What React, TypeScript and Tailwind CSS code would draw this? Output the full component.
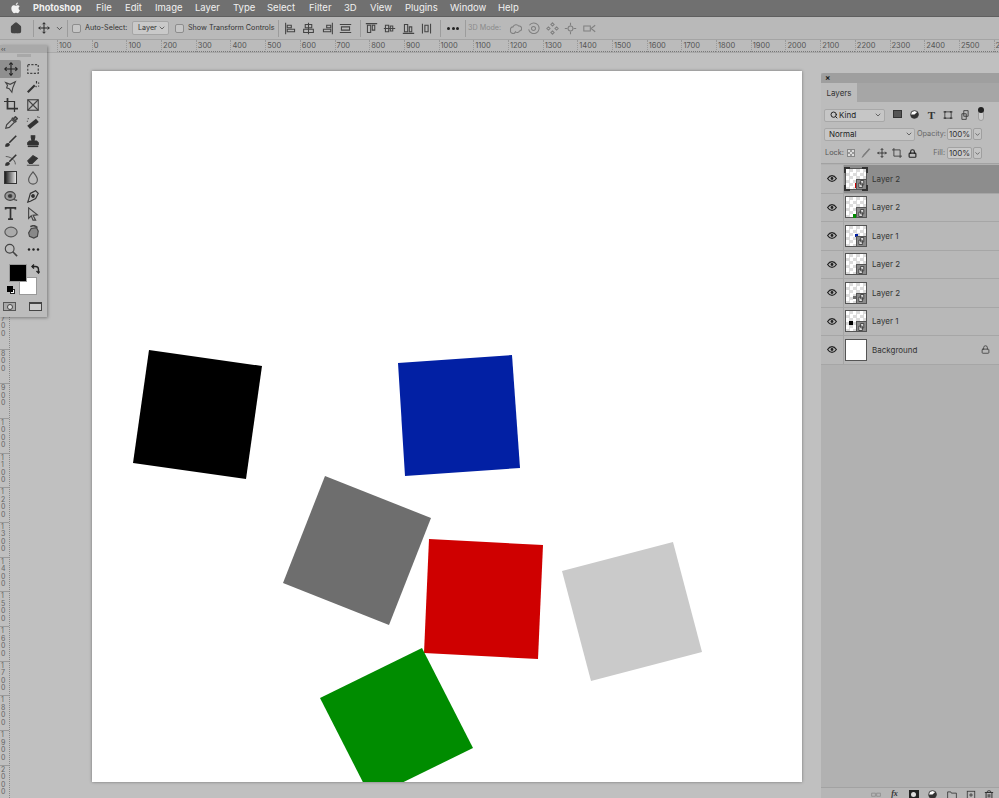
import type { ReactNode } from "react";
import { ChevronDown, House, Lock, Search, Trash2 } from "lucide-react";

const font = "font-['Inter','Liberation_Sans',sans-serif]";

const menus = [
  { label: "File", w: "w-[29px]" },
  { label: "Edit", w: "w-[30px]" },
  { label: "Image", w: "w-[40px]" },
  { label: "Layer", w: "w-[38px]" },
  { label: "Type", w: "w-[34px]" },
  { label: "Select", w: "w-[42px]" },
  { label: "Filter", w: "w-[35px]" },
  { label: "3D", w: "w-[26px]" },
  { label: "View", w: "w-[35px]" },
  { label: "Plugins", w: "w-[45px]" },
  { label: "Window", w: "w-[48px]" },
  { label: "Help", w: "w-[30px]" },
];

const hTicks = [
  "100", "0", "100", "200", "300", "400", "500", "600", "700", "800", "900", "1000", "1100", "1200",
  "1300", "1400", "1500", "1600", "1700", "1800", "1900", "2000", "2100", "2200", "2300", "2400", "2500", "2",
];

const vTicks = ["0", "100", "200", "300", "400", "500", "600", "700", "800", "900", "1000", "1100", "1200", "1300", "1400", "1500", "1600", "1700", "1800", "1900", "2000"];

const shapes = [
  { fill: "#000000", points: "57,279 170,295 154,408 41,392" },
  { fill: "#0220a4", points: "306,292 420,284 428,397 313,405" },
  { fill: "#6e6e6e", points: "233,405 339,447 297,554 191,512" },
  { fill: "#cf0000", points: "337,468 451,474 446,588 332,582" },
  { fill: "#cacaca", points: "470,500 581,471 610,581 499,610" },
  { fill: "#008c00", points: "330,577 381,677 279,727 228,627" },
];

const layers = [
  { name: "Layer 2", active: true, mark: "left-[9px] top-[14px] h-[5px] w-[2px] bg-[#cf0000]" },
  { name: "Layer 2", active: false, mark: "left-[7px] top-[17px] h-[4px] w-[4px] bg-[#008c00]" },
  { name: "Layer 1", active: false, mark: "left-[9px] top-[8px] h-[3px] w-[3px] bg-[#0220a4]" },
  { name: "Layer 2", active: false, mark: "" },
  { name: "Layer 2", active: false, mark: "left-[7px] top-[13px] h-[3px] w-[3px] bg-[#6e6e6e]" },
  { name: "Layer 1", active: false, mark: "left-[3px] top-[10px] h-[4px] w-[4px] bg-black" },
];

function Ico({ s = 14, children, c = "#333" }: { s?: number; children: ReactNode; c?: string }) {
  return (
    <svg width={s} height={s} viewBox="0 0 16 16" fill="none" stroke={c} strokeWidth="1.3" className="shrink-0">
      {children}
    </svg>
  );
}

const MoveArrows = ({ c = "#222", s = 14 }: { c?: string; s?: number }) => (
  <Ico s={s} c={c}>
    <path d="M8 1v14M1 8h14" />
    <path d="M6 3l2-2 2 2M6 13l2 2 2-2M3 6L1 8l2 2M13 6l2 2-2 2" />
  </Ico>
);

const EyeIcon = () => (
  <svg width="10" height="7" viewBox="0 0 10 7" fill="none" stroke="#222" strokeWidth="1.2" className="shrink-0">
    <path d="M.6 3.500C2 1.300 3.500.6 5 .6s3 .7 4.400 2.900C8 5.700 6.500 6.400 5 6.400S2 5.700.6 3.500z" />
    <circle cx="5" cy="3.500" r="1.400" fill="#222" stroke="none" />
  </svg>
);

// tool icons, left column then right column, row by row
const tools: ReactNode[] = [
  <MoveArrows key="move" />,
  <Ico key="marquee" c="#444"><rect x="2" y="3" width="12" height="10" strokeDasharray="2.5 1.6" /></Ico>,
  <Ico key="lasso" c="#444"><path d="M2 3l5 2 6-3-3 7-1 5-3-4-3-1 1-3z" /></Ico>,
  <Ico key="wand"><path d="M2 14l8-8" strokeWidth="2.4" /><path d="M12 1v3M14 3l1 1M11 7l1 1M15 7h-1" /></Ico>,
  <Ico key="crop"><path d="M4 0v12h12" strokeWidth="2" /><path d="M0 4h12v12" strokeWidth="1.4" /></Ico>,
  <Ico key="frame" c="#444"><rect x="2" y="2" width="12" height="12" /><path d="M2 2l12 12M14 2L2 14" /></Ico>,
  <Ico key="dropper" c="#444"><path d="M2 14l1-4 6-6 3 3-6 6z" /><path d="M9 2l5 5M11 3l2-2 2 2-2 2" strokeWidth="2" /></Ico>,
  <Ico key="heal"><path d="M3 13L13 5" strokeWidth="5" /><path d="M13 1h1M15 1v1M2 3h1M1 6h1" /></Ico>,
  <Ico key="brush"><path d="M2 14c0-2 1-3 3-3l1 1c0 2-2 2-4 2z" fill="#333" /><path d="M6 10l8-8" strokeWidth="1.8" /></Ico>,
  <Ico key="stamp"><path d="M6 2h4v2l-1 4h3l2 2v2H2v-2l2-2h3L6 4z" fill="#333" /><path d="M2 14h12" strokeWidth="2" /></Ico>,
  <Ico key="history"><path d="M2 14c0-2 1-3 3-3l1 1c0 2-2 2-4 2z" fill="#333" /><path d="M6 10l8-8" strokeWidth="1.8" /><path d="M2 4c4 0 11 3 11 9" strokeWidth="0.8" /></Ico>,
  <Ico key="eraser"><path d="M2 9l6-6 5 3-6 6H4z" fill="#333" /><path d="M1 14h14" strokeWidth="0.9" /></Ico>,
  <svg key="gradient" width="13" height="13" viewBox="0 0 13 13" className="shrink-0">
    <defs>
      <linearGradient id="g1"><stop offset="0" stopColor="#111" /><stop offset="1" stopColor="#eee" /></linearGradient>
    </defs>
    <rect x="0.5" y="0.5" width="12" height="12" fill="url(#g1)" stroke="#333" />
  </svg>,
  <Ico key="drop" c="#555"><path d="M8 1c3 4 5 6 5 9a5 5 0 0 1-10 0c0-3 2-5 5-9z" /></Ico>,
  <Ico key="dodge" c="#444"><ellipse cx="7" cy="8" rx="6" ry="5" fill="#999" /><ellipse cx="7" cy="8" rx="2" ry="1.5" fill="#333" /><path d="M11 12l4 1" /></Ico>,
  <Ico key="pen"><path d="M5 5l6-3 3 3-3 6-6 3-3 1 1-3z" /><circle cx="8" cy="8" r="1.5" fill="#333" /></Ico>,
  <Ico key="type" s={13}><path d="M2 3V1h12v2M8 1v14M5 15h6" strokeWidth="2.1" /></Ico>,
  <Ico key="select" c="#444"><path d="M3 1l10 8-5 .5 3 5.500-3 0-2-5-3 3z" /></Ico>,
  <Ico key="ellipse" c="#555"><ellipse cx="8" cy="8" rx="7" ry="5.5" fill="#aaa" /></Ico>,
  <Ico key="hand" c="#444"><path d="M3 9l3-5 6-1 2 4-1 6-4 2-5-2z" fill="#888" /><path d="M5 2c3-2 6-1 8 1" strokeWidth="1.8" /></Ico>,
  <Ico key="zoom" c="#444"><circle cx="6.5" cy="6.5" r="5" /><path d="M10 10l5 5" strokeWidth="1.8" /></Ico>,
  <svg key="more" width="13" height="13" viewBox="0 0 13 13" fill="#222" className="shrink-0">
    <circle cx="2" cy="6.5" r="1.2" /><circle cx="6.5" cy="6.5" r="1.2" /><circle cx="11" cy="6.5" r="1.2" />
  </svg>,
];

const alignIcons = [
  "M2 1v14M4 4h5v3H4zM4 9h9v3H4z",
  "M8 1v14M4 3h8v4H4zM2 9h12v4H2z",
  "M14 1v14M7 4h5v3H7zM3 9h9v3H3z",
  "M1 3h14M1 13h14M3 6h10v4H3z",
];
const distIcons = [
  "M1 2h14M3 4h4v9H3zM9 4h3v6H9z",
  "M1 8h14M3 4h4v8H3zM9 5h3v6H9z",
  "M1 14h14M3 3h4v9H3zM9 6h3v6H9z",
  "M3 2v12M13 2v12M6 4h4v8H6z",
];
const threeD = [
  "M2 10a3 3 0 0 1 3-4 4 4 0 0 1 7-1 3 3 0 0 1 1 6 3 3 0 0 1-5 1 3 3 0 0 1-6-2z",
  "M3 4a6.5 6.5 0 1 1-1 5M8 5.5a2.5 2.5 0 1 1 0 5 2.5 2.5 0 0 1 0-5z",
  "M8 1l2 2-2 2-2-2zM8 11l2 2-2 2-2-2zM3 6l2 2-2 2-2-2zM13 6l2 2-2 2-2-2z",
  "M8 5a3 3 0 1 1 0 6 3 3 0 0 1 0-6zM8 1v3M8 12v3M1 8h3M12 8h3",
  "M1 5h8v6H1zM10 8l5-4M10 8l5 4",
];

function Check() {
  return <span className="block h-[9px] w-[9px] shrink-0 rounded-[2px] border border-[#8d8d8d] bg-[#c6c6c6]" />;
}

function Sep({ m }: { m: string }) {
  return <span className={`h-[17px] w-px shrink-0 bg-[#9c9c9c] ${m}`} />;
}

function IconCell({ d, c = "#444" }: { d: string; c?: string }) {
  return (
    <span className="flex w-[18.5px] shrink-0 justify-center">
      <Ico s={13} c={c}><path d={d} /></Ico>
    </span>
  );
}

function PanelChevron() {
  return (
    <span className="flex h-[12px] w-[9px] items-center justify-center rounded-[2px] border border-[#9f9f9f] bg-[#c4c4c4]">
      <ChevronDown size={7} strokeWidth={2} color="#333" />
    </span>
  );
}

function PercentField() {
  return (
    <div className="flex items-center gap-px">
      <span className="flex h-[12px] w-[25px] items-center justify-center rounded-[2px] border border-[#a2a2a2] bg-[#c9c9c9] text-[8px] text-[#333]">100%</span>
      <PanelChevron />
    </div>
  );
}

function LayerThumb({ mark, active }: { mark: string; active: boolean }) {
  return (
    <div className="relative h-[22px] w-[22px] shrink-0 border border-[#555] bg-[conic-gradient(#dcdcdc_25%,#ffffff_0_50%,#dcdcdc_0_75%,#ffffff_0)] bg-[length:7px_7px]">
      {mark && <span className={`absolute ${mark}`} />}
      <span className="absolute -bottom-px -right-px flex h-[11px] w-[11px] items-center justify-center border border-[#555] bg-[#8a8a8a]">
        <svg width="7" height="8" viewBox="0 0 8 9" fill="#ddd" stroke="#222" strokeWidth="0.8">
          <path d="M3 .5h3.5v5H3zM1 3.5h4v5H1z" />
        </svg>
      </span>
      {active && (
        <>
          <span className="absolute -left-[2px] -top-[2px] h-[6px] w-[6px] border-l-2 border-t-2 border-[#333]" />
          <span className="absolute -right-[2px] -top-[2px] h-[6px] w-[6px] border-r-2 border-t-2 border-[#333]" />
          <span className="absolute -bottom-[2px] -left-[2px] h-[6px] w-[6px] border-b-2 border-l-2 border-[#333]" />
          <span className="absolute -bottom-[2px] -right-[2px] h-[6px] w-[6px] border-b-2 border-r-2 border-[#333]" />
        </>
      )}
    </div>
  );
}

function LayerRow({ name, active, mark }: { name: string; active: boolean; mark: string }) {
  return (
    <div className={`flex h-[28.5px] items-center border-b border-[#a6a6a6] ${active ? "bg-[#8d8d8d]" : "bg-[#b8b8b8]"}`}>
      <div className="flex h-full w-[23px] shrink-0 items-center justify-center border-r border-[#a6a6a6] bg-[#b8b8b8]">
        <EyeIcon />
      </div>
      <div className="ml-[1px]">
        <LayerThumb mark={mark} active={active} />
      </div>
      <span className="ml-[5px] text-[8px] text-[#333]">{name}</span>
    </div>
  );
}

function ToolPanel() {
  const rows = [];
  for (let i = 0; i < tools.length; i += 2) {
    rows.push(
      <div key={i} className="flex h-[18.1px] items-center">
        <div className={`flex h-full w-[21px] items-center justify-center ${i === 0 ? "rounded-r-[2px] bg-[#8f8f8f]" : ""}`}>{tools[i]}</div>
        <div className="flex h-full w-[24px] items-center justify-center">{tools[i + 1]}</div>
      </div>,
    );
  }
  return (
    <div className="absolute left-0 top-[45px] flex h-[272px] w-[47px] flex-col bg-[#bcbcbc] shadow-[1px_1px_3px_rgba(0,0,0,0.35)]">
      <div className="flex h-[8px] items-center bg-[#a9a9a9] pl-[1px] text-[6px] leading-none text-[#333]">‹‹</div>
      <div className="mx-auto mt-[1px] h-[3px] w-[14px] bg-[#a8a8a8]" />
      <div className="mt-[3px] flex flex-col">{rows}</div>
      <div className="relative mt-[2px] h-[36px]">
        <span className="absolute left-[19px] top-[16px] h-[18px] w-[18px] border border-[#999] bg-white" />
        <span className="absolute left-[9px] top-[3px] h-[18px] w-[18px] border border-[#999] bg-black" />
        <svg width="9" height="10" viewBox="0 0 9 10" fill="none" stroke="#222" strokeWidth="1.4" className="absolute left-[31px] top-[3px]">
          <path d="M1 2.500h3.500a3 3 0 0 1 3 3V8" />
          <path d="M3 .5L1 2.500l2 2M5.500 7l2 2 1-1.500" />
        </svg>
        <span className="absolute left-[10px] top-[28px] h-[5px] w-[5px] border border-[#222] bg-white" />
        <span className="absolute left-[7px] top-[25px] h-[6px] w-[6px] bg-black" />
      </div>
      <div className="mt-[5px] flex items-center">
        <div className="flex w-[19px] justify-center">
          <span className="flex h-[9px] w-[13px] items-center justify-center border border-[#555] bg-[#a8a8a8]">
            <span className="h-[6px] w-[6px] rounded-full border border-[#444] bg-[#ddd]" />
          </span>
        </div>
        <div className="ml-[5px] flex w-[23px] justify-center">
          <span className="h-[9px] w-[13px] border border-t-2 border-[#444] bg-[#ccc]" />
        </div>
      </div>
    </div>
  );
}

function LayersPanel() {
  return (
    <div className="flex w-[178px] shrink-0 flex-col bg-[#b1b1b1] text-[#444]">
      <div className="flex h-[10px] items-center rounded-tl-[3px] bg-[#9f9f9f] pl-[4px] text-[8px] font-bold leading-none text-[#222]">×</div>
      <div className="flex h-[19px] bg-[#a6a6a6]">
        <div className="flex w-[36px] items-center justify-center bg-[#bcbcbc] text-[8px] text-[#333]">Layers</div>
      </div>
      <div className="flex h-[62px] flex-col border-b border-[#a2a2a2] bg-[#bcbcbc] px-[3px]">
        <div className="mt-[7px] flex h-[12px] items-center">
          <div className="flex h-[13px] w-[61px] items-center rounded-[2px] border border-[#a8a8a8] bg-[#c6c6c6] pl-[5px] text-[8px] text-[#222]">
            <Search size={8} strokeWidth={3} color="#222" />
            <span className="ml-[1px]">Kind</span>
            <ChevronDown size={8} strokeWidth={2} color="#333" className="ml-auto mr-[2px]" />
          </div>
          <div className="ml-[4px] flex">
            <span className="flex w-[17px] justify-center"><span className="flex h-[8px] w-[9px] items-end justify-center border border-[#333] bg-[#555]" /></span>
            <span className="flex w-[17px] justify-center">
              <svg width="9" height="9" viewBox="0 0 10 10"><circle cx="5" cy="5" r="4.3" fill="#fff" stroke="#333" /><path d="M5 5L8.2 2A4.3 4.3 0 0 1 5 9.3 4.3 4.3 0 0 1 .7 5z" fill="#333" /></svg>
            </span>
            <span className="flex w-[17px] justify-center font-['Liberation_Serif',serif] text-[11px] font-bold leading-[10px] text-[#333]">T</span>
            <span className="flex w-[16px] justify-center"><Ico s={10}><rect x="3" y="3" width="10" height="10" /><path d="M1 3h4M1 13h4M11 3h4M11 13h4" strokeWidth="2" /></Ico></span>
            <span className="flex w-[17px] justify-center"><Ico s={10}><path d="M6 1h7v9H6zM3 6h7v9H3z" fill="#bbb" /></Ico></span>
          </div>
          <div className="relative ml-[5px] h-[12px] w-[6px] rounded-full border border-[#9e9e9e] bg-[#ccc]">
            <span className="absolute -left-px -top-[3px] h-[6px] w-[6px] rounded-full bg-[#222]" />
          </div>
        </div>
        <div className="mt-[7px] flex h-[12px] items-center">
          <div className="flex h-[13px] w-[91px] items-center rounded-[2px] border border-[#a8a8a8] bg-[#c6c6c6] pl-[4px] text-[8px] text-[#222]">
            Normal
            <ChevronDown size={8} strokeWidth={2} color="#333" className="ml-auto mr-[1px]" />
          </div>
          <span className="ml-[2px] w-[30px] whitespace-nowrap text-[7.3px] text-[#666]">Opacity:</span>
          <PercentField />
        </div>
        <div className="mt-[7px] flex h-[12px] items-center">
          <span className="ml-[1px] w-[18px] text-[7.3px] text-[#555]">Lock:</span>
          <span className="flex w-[15.5px] justify-center">
            <span className="h-[8px] w-[8px] border border-[#888] bg-[conic-gradient(#999_25%,#ddd_0_50%,#999_0_75%,#ddd_0)] bg-[length:4px_4px]" />
          </span>
          <span className="flex w-[15.5px] justify-center"><Ico s={10} c="#777"><path d="M2 15l2-4 9-10 1 1-9 10z" fill="#777" /></Ico></span>
          <span className="flex w-[15.5px] justify-center"><MoveArrows s={10} /></span>
          <span className="flex w-[15.5px] justify-center"><Ico s={10}><path d="M3 0v13h13M0 3h13v13" /></Ico></span>
          <span className="flex w-[15.5px] justify-center"><Lock size={9} strokeWidth={3} color="#222" /></span>
          <span className="ml-auto text-[7.3px] text-[#666]">Fill:</span>
          <div className="ml-[2px] mr-[14px]"><PercentField /></div>
        </div>
      </div>
      <div className="mt-px flex flex-col">
        {layers.map((layer, i) => (
          <LayerRow key={i} {...layer} />
        ))}
        <div className="flex h-[28.5px] items-center border-b border-[#a6a6a6] bg-[#b8b8b8]">
          <div className="flex h-full w-[23px] shrink-0 items-center justify-center border-r border-[#a6a6a6]">
            <EyeIcon />
          </div>
          <div className="ml-[1px] h-[22px] w-[22px] shrink-0 border border-[#555] bg-white" />
          <span className="ml-[5px] text-[8px] text-[#333]">Background</span>
          <Lock size={9} strokeWidth={2} color="#333" className="ml-auto mr-[9px]" />
        </div>
      </div>
      <div className="mt-auto flex h-[11px] items-start justify-end overflow-hidden border-t border-[#a2a2a2] bg-[#b6b6b6] pr-[2px] pt-[2px] text-[#333]">
        <span className="flex w-[19px] justify-center"><Ico s={10} c="#8a8a8a"><path d="M1 5h6v5H1zM9 5h6v5H9z" /></Ico></span>
        <span className="flex w-[19px] justify-center font-['Liberation_Serif',serif] text-[8px] font-bold italic leading-[8px]">fx</span>
        <span className="flex w-[19px] justify-center"><span className="flex h-[9px] w-[10px] items-center justify-center bg-[#222]"><span className="h-[5px] w-[5px] rounded-full bg-[#ddd]" /></span></span>
        <span className="flex w-[19px] justify-center">
          <svg width="9" height="9" viewBox="0 0 10 10"><circle cx="5" cy="5" r="4.3" fill="#fff" stroke="#333" /><path d="M5 5L8.2 2A4.3 4.3 0 0 1 5 9.3 4.3 4.3 0 0 1 .7 5z" fill="#333" /></svg>
        </span>
        <span className="flex w-[19px] justify-center"><Ico s={10}><path d="M1 3h5l1 2h8v9H1z" /></Ico></span>
        <span className="flex w-[19px] justify-center"><Ico s={10}><rect x="2" y="2" width="12" height="12" /><path d="M8 5v6M5 8h6" /></Ico></span>
        <span className="flex w-[17px] justify-center"><Trash2 size={10} strokeWidth={2.4} color="#333" /></span>
      </div>
    </div>
  );
}

export default function App() {
  return (
    <div className={`relative flex h-[798px] w-[999px] flex-col overflow-hidden bg-[#c0c0c0] ${font}`}>
      {/* menu bar */}
      <div className="flex h-[17px] shrink-0 items-center border-b border-[#5f5f5f] bg-[#707070] text-[9.5px] text-[#f0f0f0]">
        <svg width="11" height="12" viewBox="0 0 16 18" fill="#f2f2f2" className="ml-[10px] shrink-0">
          <path d="M12.6 9.5c0-2 1.6-3 1.7-3.1-1-1.4-2.4-1.6-2.9-1.6-1.2-.1-2.4.7-3 .7s-1.6-.7-2.6-.7C4.400 4.800 3.100 5.600 2.400 6.800 1 9.200 2 12.800 3.400 14.800c.7 1 1.500 2.100 2.500 2 1-.1 1.400-.6 2.600-.6s1.600.6 2.600.6c1.100 0 1.800-1 2.400-2 .8-1.100 1.100-2.200 1.100-2.300-.1 0-2-.8-2-3zM10.700 3.400c.5-.7.900-1.600.8-2.500-.8 0-1.700.5-2.300 1.200-.5.6-.9 1.500-.8 2.400.9.100 1.800-.4 2.300-1.100z" />
        </svg>
        <span className="ml-[12px] w-[63px] shrink-0 text-[9.2px] font-bold">Photoshop</span>
        {menus.map((m) => (
          <span key={m.label} className={`shrink-0 ${m.w}`}>{m.label}</span>
        ))}
      </div>

      {/* options bar */}
      <div className="flex h-[23px] shrink-0 items-center whitespace-nowrap border-b border-[#a4a4a4] bg-[#b9b9b9] text-[7.2px] text-[#333]">
        <span className="ml-[9px] flex w-[13px] justify-center"><House size={12} strokeWidth={2.5} color="#444" fill="#444" /></span>
        <Sep m="ml-[11px]" />
        <span className="ml-[4px]"><MoveArrows s={12} /></span>
        <ChevronDown size={9} strokeWidth={2} color="#333" className="ml-[5px]" />
        <Sep m="ml-[3px]" />
        <span className="ml-[4px]"><Check /></span>
        <span className="ml-[4px] w-[43px] shrink-0">Auto-Select:</span>
        <span className="ml-[4px] flex h-[14px] w-[37px] shrink-0 items-center rounded-[2px] border border-[#a5a5a5] bg-[#c9c9c9] pl-[5px]">
          Layer
          <ChevronDown size={8} strokeWidth={2} color="#333" className="ml-auto mr-[2px]" />
        </span>
        <span className="ml-[6px]"><Check /></span>
        <span className="ml-[4px] w-[85px] shrink-0">Show Transform Controls</span>
        <Sep m="ml-[5px]" />
        <span className="ml-[2px] flex">
          {alignIcons.map((d) => <IconCell key={d} d={d} />)}
        </span>
        <Sep m="ml-[5px]" />
        <span className="ml-[1px] flex">
          {distIcons.map((d) => <IconCell key={d} d={d} />)}
        </span>
        <Sep m="ml-[4px]" />
        <span className="ml-[6px] flex w-[12px] justify-between">
          <span className="h-[3px] w-[3px] rounded-full bg-[#222]" />
          <span className="h-[3px] w-[3px] rounded-full bg-[#222]" />
          <span className="h-[3px] w-[3px] rounded-full bg-[#222]" />
        </span>
        <Sep m="ml-[6px]" />
        <span className="ml-[2px] w-[36px] shrink-0 text-[#8a8a8a]">3D Mode:</span>
        <span className="ml-[2px] flex">
          {threeD.map((d) => <IconCell key={d} d={d} c="#808080" />)}
        </span>
      </div>

      {/* top ruler */}
      <div className="flex h-[13px] shrink-0 overflow-hidden border-b border-[#aaa] bg-[#bbbbbb] pl-[57px]">
        {hTicks.map((t, i) => (
          <div key={i} className="h-full w-[34.7px] shrink-0 border-b border-l border-dotted border-b-[#777] border-l-[#9a9a9a] pl-[1px] text-[7.5px] leading-[11px] text-[#555]">
            {t}
          </div>
        ))}
      </div>

      {/* workspace */}
      <div className="flex min-h-0 flex-1">
        <div className="w-[10px] shrink-0 border-r border-dotted border-[#888] pt-[18px] text-[7px] leading-[7.5px] text-[#666]">
          {vTicks.map((t) => (
            <div key={t} className="flex h-[34.7px] flex-col border-t border-[#9a9a9a] pl-[1px]">
              {t.split("").map((ch, i) => (
                <span key={i}>{ch}</span>
              ))}
            </div>
          ))}
        </div>
        <div className="ml-[82px] mt-[18px] h-[711px] w-[710px] shrink-0 overflow-hidden bg-white shadow-[0_0_3px_rgba(0,0,0,0.4)]">
          <svg width="710" height="711" viewBox="0 0 710 711">
            {shapes.map((s) => (
              <polygon key={s.fill} points={s.points} fill={s.fill} />
            ))}
          </svg>
        </div>
        <div className="ml-[19px] mt-[20px] flex shrink-0">
          <LayersPanel />
        </div>
      </div>

      <ToolPanel />
    </div>
  );
}
